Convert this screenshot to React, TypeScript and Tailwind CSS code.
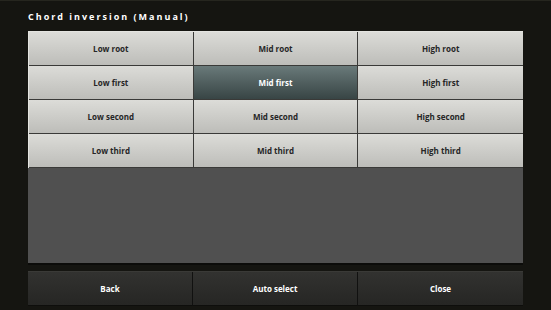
const rows = [
  ['Low root', 'Mid root', 'High root'],
  ['Low first', 'Mid first', 'High first'],
  ['Low second', 'Mid second', 'High second'],
  ['Low third', 'Mid third', 'High third'],
];

const selected = 'Mid first';

export default function App() {
  return (
    <div
      className="w-[551px] h-[310px] bg-[#151511] border-t border-[#26261f] flex flex-col px-[28px]"
      style={{ fontFamily: '"Open Sans", "Noto Sans", sans-serif' }}
    >
      <div className="h-[30px] flex items-center text-[9px] font-bold text-white tracking-[2px] pt-[2px]">
        Chord inversion (Manual)
      </div>

      <div className="grid grid-cols-3 border-t border-l border-[#e4e4e0]">
        {rows.flat().map((label, i) => {
          const active = label === selected;
          const lastCol = i % 3 === 2;
          return (
            <div
              key={label}
              className={
                'h-[34px] flex items-center justify-center text-[8px] font-bold border-b border-[#3a3a38] ' +
                (lastCol ? '' : 'border-r ') +
                (active
                  ? 'bg-gradient-to-b from-[#6a7a7a] to-[#384545] text-white border-[#0e1212]'
                  : 'bg-gradient-to-b from-[#dcdcd8] to-[#bdbdb9] text-[#262626]')
              }
            >
              {label}
            </div>
          );
        })}
      </div>

      <div className="h-[97px] bg-[#505050] border-b-2 border-[#0c0c0a]" />

      <div className="mt-[6px] grid grid-cols-3 border-t border-[#3a3a37]">
        {['Back', 'Auto select', 'Close'].map((label, i) => (
          <div
            key={label}
            className={
              'h-[34px] flex items-center justify-center text-[8px] font-bold text-white bg-gradient-to-b from-[#323230] to-[#262624] border-b border-[#0e0e0c] ' +
              (i < 2 ? 'border-r border-r-[#111110]' : '')
            }
          >
            {label}
          </div>
        ))}
      </div>
    </div>
  );
}
